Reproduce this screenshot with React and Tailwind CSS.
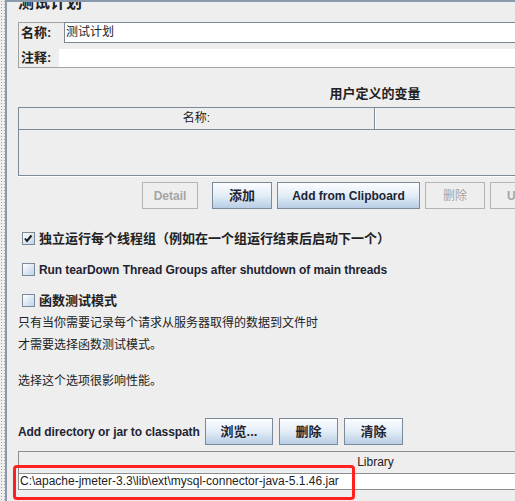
import React from "react";

const btn =
  "h-[27px] shrink-0 flex items-center justify-center border border-[#7a8a99] bg-linear-to-b from-[#fcfdff] via-[#e3edf7] to-[#b8cde4] text-[12px] font-bold text-[#1e2433]";
const btnDis =
  "h-[27px] shrink-0 flex items-center justify-center border border-[#b4b4b4] bg-[#eeeeee] text-[12px] font-bold text-[#a5a5a5]";

function Check({ checked }) {
  return (
    <div className="w-[13px] h-[13px] shrink-0 border border-[#7a8a99] bg-linear-to-br from-[#ffffff] to-[#c0d3e9] flex items-center justify-center">
      {checked && (
        <svg width="11" height="11" viewBox="0 0 11 11">
          <polyline points="2,5.5 4,8 8.5,2.5" fill="none" stroke="#1a1a1a" strokeWidth="2" />
        </svg>
      )}
    </div>
  );
}

export default function App() {
  return (
    <div className="w-[515px] h-[501px] bg-[#eeeeee] overflow-hidden relative flex font-['Liberation_Sans','Noto_Sans_CJK_SC',sans-serif] text-[#222222]">
      <div className="w-[5px] shrink-0 bg-[radial-gradient(#a8a8a8_0.7px,transparent_0.9px)] bg-[size:3px_3px]" />
      <div className="w-[2px] shrink-0 bg-[#8a9aac]" />
      <div className="flex-1 min-w-0 flex flex-col border-t-2 border-[#8a9aac]">
        <div className="pl-[11px] w-[725px] flex flex-col">
          {/* title */}
          <div className="h-[20px] overflow-hidden">
            <div className="-mt-[7px] text-[16px] leading-[16px] font-bold">测试计划</div>
          </div>

          {/* name / comment panel */}
          <div className="h-[46px] border border-[#a3a3a3] flex flex-col">
            <div className="h-[20px] flex">
              <div className="w-[45px] pl-[2px] text-[13px] font-bold leading-[20px]">名称:</div>
              <div className="flex-1 h-[21px] -mt-px border border-[#7a8a99] bg-white text-[12px] leading-[19px] pl-[1px]">
                测试计划
              </div>
            </div>
            <div className="mt-[6px] h-[18px] flex">
              <div className="w-[40px] pl-[2px] text-[13px] font-bold leading-[18px]">注释:</div>
              <div className="flex-1 bg-white" />
            </div>
          </div>

          {/* user defined variables */}
          <div className="mt-[18px] h-[16px] leading-[16px] text-center text-[13px] font-bold">用户定义的变量</div>

          <div className="mt-[5px] border-t border-l border-b border-[#7a8a99] flex flex-col">
            <div className="h-[22px] flex border-b border-[#7a8a99]">
              <div className="w-[356px] border-r border-[#7a8a99] text-center text-[12px] leading-[21px]">名称:</div>
              <div className="flex-1 border-l border-white" />
            </div>
            <div className="h-[45px]" />
          </div>
          <div className="h-px bg-white" />

          {/* buttons */}
          <div className="mt-[5px] flex">
            <div className={btnDis + " ml-[124px] w-[56px]"}>Detail</div>
            <div className={btn + " ml-[14px] w-[60px] text-[13px]"}>添加</div>
            <div className={btn + " ml-[5px] w-[143px]"}>Add from Clipboard</div>
            <div className={btnDis + " ml-[5px] w-[60px] font-normal"}>删除</div>
            <div className={btnDis + " ml-[5px] w-[60px] justify-start pl-[16px]"}>Up</div>
          </div>

          {/* checkboxes */}
          <div className="mt-[23px] h-[13px] flex items-center pl-[4px] gap-[4px]">
            <Check checked />
            <span className="text-[13px] font-bold leading-[16px] whitespace-nowrap">独立运行每个线程组（例如在一个组运行结束后启动下一个）</span>
          </div>
          <div className="mt-[18px] h-[13px] flex items-center pl-[4px] gap-[4px]">
            <Check />
            <span className="text-[12px] font-bold leading-[16px] tracking-[-0.08px] whitespace-nowrap text-[#1e2433]">Run tearDown Thread Groups after shutdown of main threads</span>
          </div>
          <div className="mt-[18px] h-[13px] flex items-center pl-[4px] gap-[4px]">
            <Check />
            <span className="text-[13px] font-bold leading-[16px] whitespace-nowrap">函数测试模式</span>
          </div>

          {/* description */}
          <div className="mt-[7px] flex flex-col text-[12px] leading-[18px] whitespace-nowrap">
            <div className="h-[18px] mb-[4px]">只有当你需要记录每个请求从服务器取得的数据到文件时</div>
            <div className="h-[18px]">才需要选择函数测试模式。</div>
            <div className="h-[18px]" />
            <div className="h-[18px]">选择这个选项很影响性能。</div>
          </div>

          {/* classpath */}
          <div className="mt-[28px] h-[27px] flex items-center">
            <div className="w-[187px] text-[12px] font-bold tracking-[-0.09px] whitespace-nowrap text-[#1e2433]">Add directory or jar to classpath</div>
            <div className={btn + " w-[68px] text-[13px]"}>浏览...</div>
            <div className={btn + " ml-[6px] w-[59px] text-[13px]"}>删除</div>
            <div className={btn + " ml-[6px] w-[59px] text-[13px]"}>清除</div>
          </div>

          <div className="mt-[6px] border-t border-l border-[#8e8e8e] flex flex-col">
            <div className="h-[22px] border-b border-[#8e8e8e] text-center text-[12px] leading-[21px]">Library</div>
            <div className="h-[16px] border-b border-[#8e8e8e] bg-white text-[12px] leading-[15px] pl-[1px] whitespace-nowrap">
              C:\apache-jmeter-3.3\lib\ext\mysql-connector-java-5.1.46.jar
            </div>
          </div>
        </div>
      </div>

      {/* red highlight */}
      <div className="absolute left-[13px] top-[465px] w-[342px] h-[35px] border-[3px] border-[#ff2020] rounded-[4px]" />
    </div>
  );
}
